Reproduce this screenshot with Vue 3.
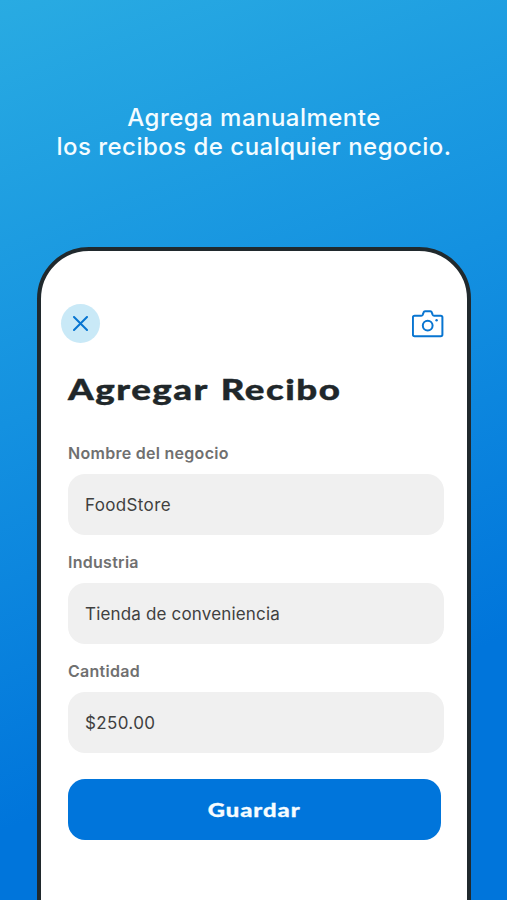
<script setup>
import { ref } from 'vue';

const fields = ref([
    { id: 'business', label: 'Nombre del negocio', value: 'FoodStore' },
    { id: 'industry', label: 'Industria', value: 'Tienda de conveniencia' },
    { id: 'amount', label: 'Cantidad', value: '$250.00' },
]);
</script>

<template>
    <main class="screen">
        <p class="headline">
            Agrega manualmente<br>
            los recibos de cualquier negocio.
        </p>
        <section class="phone">
            <header class="toolbar">
                <button class="close" type="button" aria-label="Cerrar">
                    <svg width="15" height="15" viewBox="0 0 15 15">
                        <path d="M1 1L14 14M14 1L1 14" />
                    </svg>
                </button>
                <button class="camera" type="button" aria-label="Tomar foto">
                    <svg width="32" height="28" viewBox="0 0 32 28">
                        <path d="M2.5 5.7H9.3Q10.3 5.7 10.7 4.8L11.6 2.4Q12 1.2 13 1.2H18.4Q19.4 1.2 19.8 2.4L20.7 4.8Q21.1 5.7 22.1 5.7H28.7Q30.4 5.7 30.4 7.3V24.6Q30.4 26.2 28.7 26.2H2.5Q.9 26.2 .9 24.6V7.3Q.9 5.7 2.5 5.7Z" />
                        <circle cx="15.7" cy="15.6" r="4.9" />
                        <circle class="dot" cx="24.6" cy="10.3" r="1.2" />
                    </svg>
                </button>
            </header>
            <h1 class="title">Agregar Recibo</h1>
            <form class="form" @submit.prevent>
                <div v-for="field in fields" :key="field.id" class="field">
                    <label :for="field.id">{{ field.label }}</label>
                    <input :id="field.id" v-model="field.value" :class="field.id" type="text">
                </div>
                <button class="save" type="submit"><span>Guardar</span></button>
            </form>
        </section>
    </main>
</template>

<style>
    body {
        margin: 0;
    }
</style>

<style scoped>
    .screen {
        box-sizing: border-box;
        height: 900px;
        padding: 103px 36px 0 37px;
        overflow: hidden;
        font-family: Inter, "Liberation Sans", sans-serif;
        background: linear-gradient(159deg, #29abe2 0%, #1491e0 39%, #0075db 76%);
    }

    .headline {
        height: 144px;
        margin: 0;
        font-size: 24px;
        font-weight: 500;
        line-height: 29px;
        letter-spacing: 0.48px;
        text-align: center;
        white-space: nowrap;
        color: #f4fcff;
    }

    .phone {
        box-sizing: border-box;
        height: 720px;
        padding: 53px 23px 0 27px;
        border: 4px solid #20292d;
        border-radius: 52px;
        background: #fff;
    }

    .toolbar {
        display: flex;
        align-items: center;
        justify-content: space-between;
        height: 39px;
        margin-left: -7px;
    }

    button {
        padding: 0;
        border: 0;
        background: none;
    }

    svg {
        display: block;
        fill: none;
        stroke: #0875d1;
        stroke-width: 2;
        stroke-linecap: round;
        stroke-linejoin: round;
    }

    .close {
        display: grid;
        place-items: center;
        width: 39px;
        height: 39px;
        border-radius: 50%;
        background: #c9e9f7;
    }

    .camera .dot {
        fill: #0875d1;
        stroke: none;
    }

    .title {
        width: max-content;
        margin: 28px 0 0;
        font-family: Lato, sans-serif;
        font-size: 28px;
        font-weight: 900;
        line-height: 36px;
        letter-spacing: 1.15px;
        word-spacing: 1.8px;
        color: #20272a;
        -webkit-text-stroke: 0.4px #20272a;
        transform: scaleX(1.31);
        transform-origin: left;
    }

    .form {
        display: flex;
        flex-direction: column;
        margin-top: 34px;
    }

    .field {
        display: flex;
        flex-direction: column;
        height: 109px;
    }

    label {
        height: 33px;
        font-size: 16px;
        font-weight: 600;
        line-height: 24px;
        letter-spacing: 0.28px;
        color: #707070;
    }

    input {
        box-sizing: border-box;
        width: 100%;
        height: 61px;
        padding: 1px 17px 0;
        border: 0;
        border-radius: 17px;
        outline: 0;
        font: 400 17px Inter, sans-serif;
        letter-spacing: 0.17px;
        color: #3f4040;
        background: #f0f0f0;
    }

    .business,
    .amount {
        letter-spacing: 0.36px;
    }

    .save {
        height: 61px;
        margin: 11px 3px 0 0;
        padding-bottom: 1px;
        border-radius: 17px;
        font-family: Lato, sans-serif;
        font-size: 19px;
        font-weight: 900;
        letter-spacing: 0.8px;
        color: #f6fcff;
        -webkit-text-stroke: 0.3px #f6fcff;
        background: #0075db;
    }

    .save span {
        display: inline-block;
        transform: scaleX(1.25);
    }
</style>
